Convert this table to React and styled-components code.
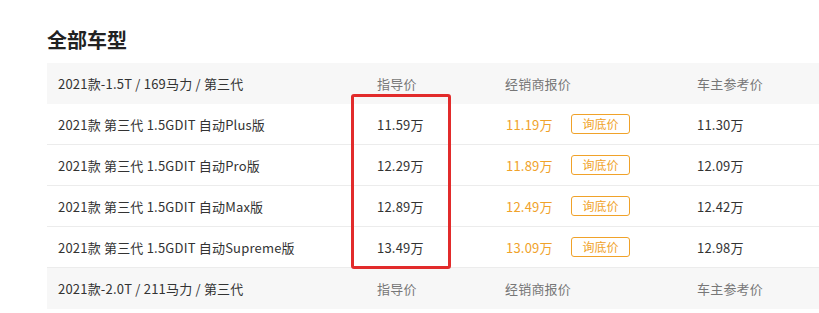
import React from 'react';
import styled, { createGlobalStyle } from 'styled-components';

const Global = createGlobalStyle`
  html, body { margin:0; padding:0; background:#fff; overflow:hidden; }
  body { font-family:"Microsoft YaHei","Noto Sans CJK SC",sans-serif; color:#333; }
`;

const Page = styled.div`
  padding:28px 0 0 47px;
  width:772px;
`;

const Heading = styled.h2`
  margin:0 0 11px;
  font-size:20px;
  line-height:24px;
  font-weight:700;
  color:#222;
`;

const Table = styled.div`
  position:relative;
  width:780px;
`;

const Row = styled.div`
  display:grid;
  grid-template-columns:330px 128px 192px 1fr;
  align-items:center;
  height:41px;
  box-sizing:border-box;
  font-size:13px;
  letter-spacing:0.2px;
  background:${p => p.$head ? '#f7f7f7' : '#fff'};
  border-bottom:${p => p.$head ? 'none' : '1px solid #ececec'};
`;

const Name = styled.div`
  padding-left:11px;
  white-space:nowrap;
`;

const Label = styled.div`
  color:#777;
`;

const Dealer = styled.div`
  display:flex;
  align-items:center;
  padding-left:1px;
`;

const Orange = styled.span`
  width:65px;
  color:#f0a22a;
`;

const AskBtn = styled.span`
  width:57px;
  height:18px;
  border:1px solid #f0a22a;
  border-radius:3px;
  color:#f0a22a;
  font-size:12px;
  line-height:18px;
  letter-spacing:0;
  text-align:center;
`;

const Highlight = styled.div`
  position:absolute;
  left:304px;
  top:31px;
  width:100px;
  height:175px;
  box-sizing:border-box;
  border:3px solid #e22b2b;
  border-radius:3px;
`;

const groups = [
  {
    title: '2021款-1.5T / 169马力 / 第三代',
    items: [
      ['2021款 第三代 1.5GDIT 自动Plus版', '11.59万', '11.19万', '11.30万'],
      ['2021款 第三代 1.5GDIT 自动Pro版', '12.29万', '11.89万', '12.09万'],
      ['2021款 第三代 1.5GDIT 自动Max版', '12.89万', '12.49万', '12.42万'],
      ['2021款 第三代 1.5GDIT 自动Supreme版', '13.49万', '13.09万', '12.98万'],
    ],
  },
  { title: '2021款-2.0T / 211马力 / 第三代', items: [] },
];

function HeadRow({ title }) {
  return (
    <Row $head>
      <Name>{title}</Name>
      <Label>指导价</Label>
      <Label>经销商报价</Label>
      <Label>车主参考价</Label>
    </Row>
  );
}

export default function App() {
  return (
    <Page>
      <Global />
      <Heading>全部车型</Heading>
      <Table>
        {groups.map(g => (
          <React.Fragment key={g.title}>
            <HeadRow title={g.title} />
            {g.items.map(([name, guide, dealer, owner]) => (
              <Row key={name}>
                <Name>{name}</Name>
                <div>{guide}</div>
                <Dealer>
                  <Orange>{dealer}</Orange>
                  <AskBtn>询底价</AskBtn>
                </Dealer>
                <div>{owner}</div>
              </Row>
            ))}
          </React.Fragment>
        ))}
        <Highlight />
      </Table>
    </Page>
  );
}
